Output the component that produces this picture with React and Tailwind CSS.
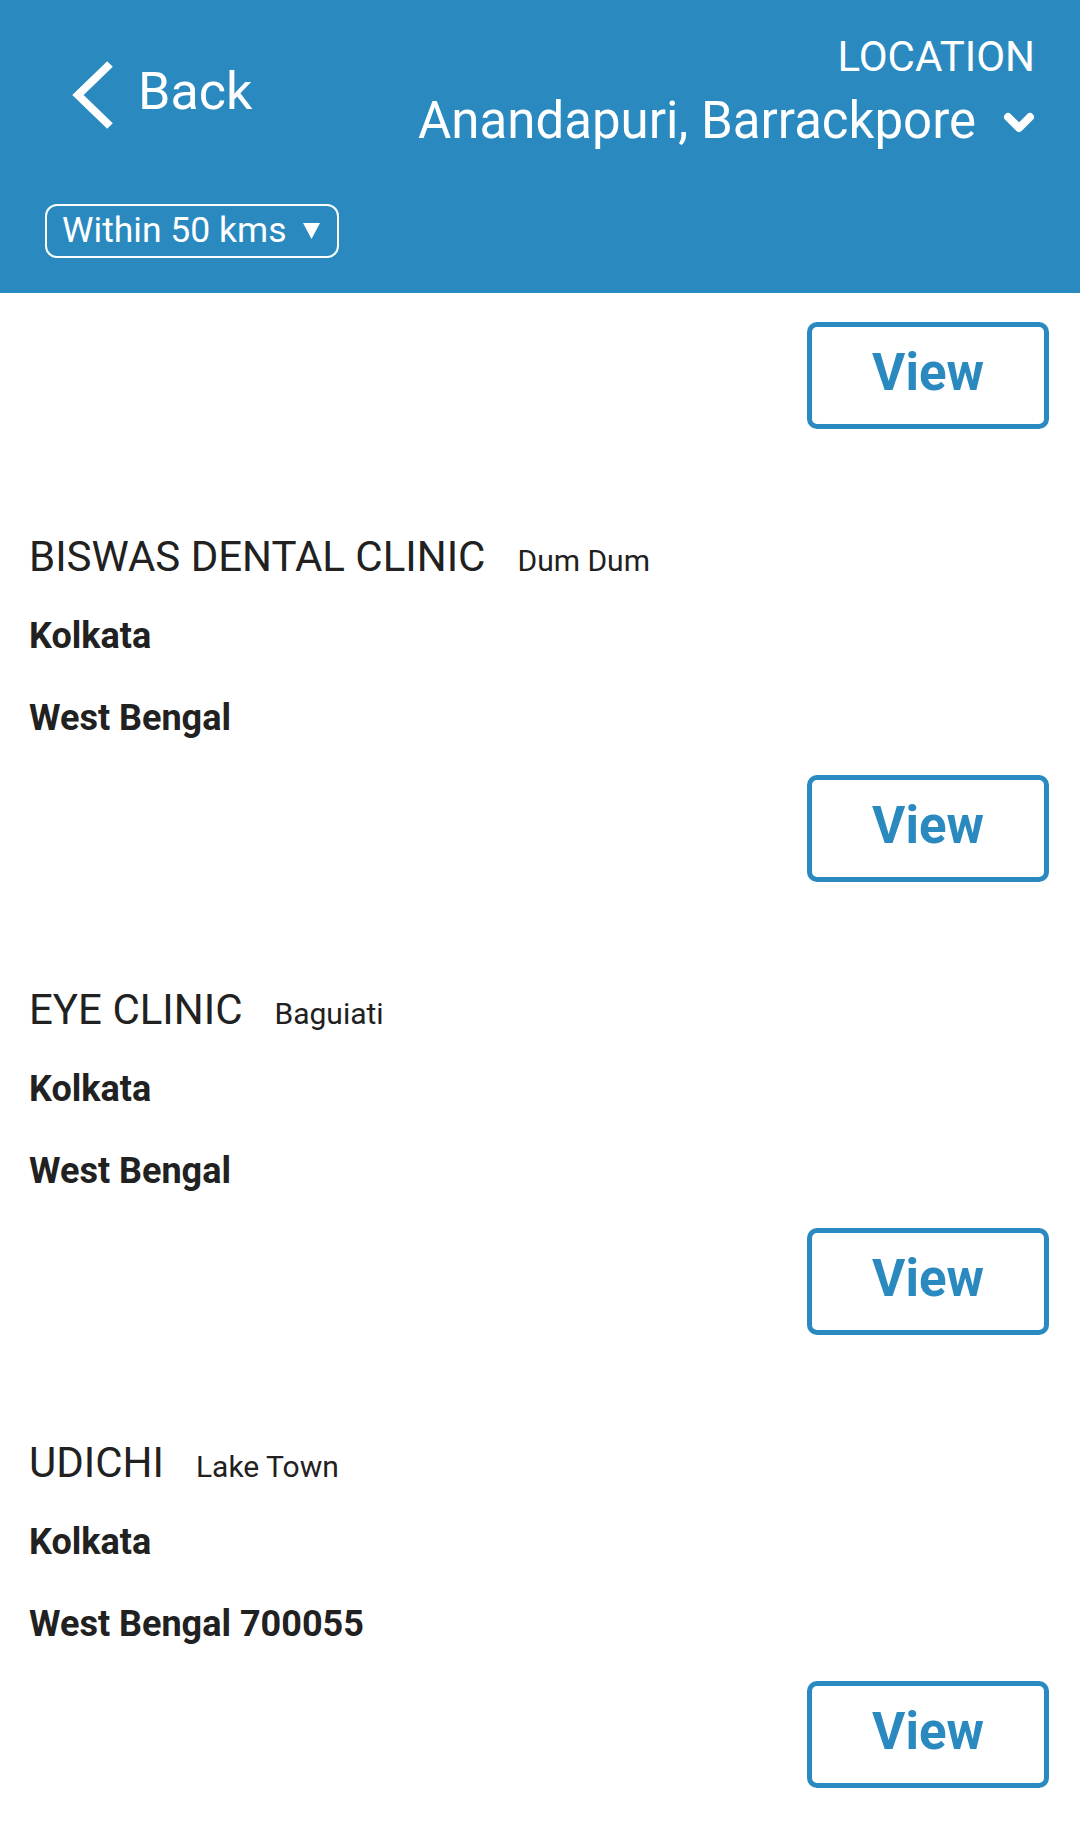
import React from "react";

const clinics = [
  { name: "BISWAS DENTAL CLINIC", area: "Dum Dum", city: "Kolkata", state: "West Bengal" },
  { name: "EYE CLINIC", area: "Baguiati", city: "Kolkata", state: "West Bengal" },
  { name: "UDICHI", area: "Lake Town", city: "Kolkata", state: "West Bengal 700055" },
];

const ViewButton = () => (
  <div className="flex justify-end">
    <button className="w-[242px] h-[107px] flex items-center justify-center pb-[7px] border-[5px] border-[#2a8abf] rounded-[10px] text-[51px] font-bold text-[#2a8abf] leading-none">
      View
    </button>
  </div>
);

const App = () => {
  return (
    <div className="min-h-screen bg-white" style={{ fontFamily: "Roboto, 'Noto Sans', sans-serif" }}>
      <header className="h-[293px] bg-[#2a8abf] text-white flex flex-col">
        <div className="h-[204px] flex justify-between">
          <div className="flex items-start pt-[61px] pl-[72px]">
            <svg width="42" height="68" viewBox="0 0 42 68" fill="none">
              <polyline points="38,3 6,34 38,65" stroke="white" strokeWidth="8" strokeLinejoin="miter" />
            </svg>
            <span className="ml-[24px] text-[52px] leading-[62px]">Back</span>
          </div>
          <div className="flex flex-col items-end pt-[33px] pr-[45px]">
            <span className="text-[42px] leading-[48px]">LOCATION</span>
            <div className="mt-[10px] flex items-center">
              <span className="text-[51px] leading-[60px]">Anandapuri, Barrackpore</span>
              <svg className="ml-[27px] mt-[2px]" width="32" height="21" viewBox="0 0 32 21" fill="none">
                <polyline points="5,5 16,16 27,5" stroke="white" strokeWidth="8" strokeLinecap="round" strokeLinejoin="round" />
              </svg>
            </div>
          </div>
        </div>
        <div className="pl-[45px]">
          <div className="inline-flex items-center h-[54px] border-2 border-white rounded-[12px] pl-[15px] pr-[17px]">
            <span className="text-[35.5px] leading-none">Within 50 kms</span>
            <svg className="ml-[16px]" width="17" height="16" viewBox="0 0 17 16">
              <polygon points="0,0 17,0 8.5,16" fill="white" />
            </svg>
          </div>
        </div>
      </header>

      <main className="pl-[29px] pr-[31px]">
        <div className="pt-[29px]">
          <ViewButton />
        </div>
        {clinics.map((c) => (
          <div key={c.name} className="pt-[104px]">
            <div className="flex items-baseline text-[#212121]">
              <span className="text-[42px] leading-[48px]">{c.name}</span>
              <span className="ml-[32px] text-[30px]">{c.area}</span>
            </div>
            <p className="mt-[32px] text-[36px] leading-[42px] font-bold text-[#212121]">{c.city}</p>
            <p className="mt-[40px] text-[36px] leading-[42px] font-bold text-[#212121]">{c.state}</p>
            <div className="mt-[36px]">
              <ViewButton />
            </div>
          </div>
        ))}
      </main>
    </div>
  );
};

export default App;
